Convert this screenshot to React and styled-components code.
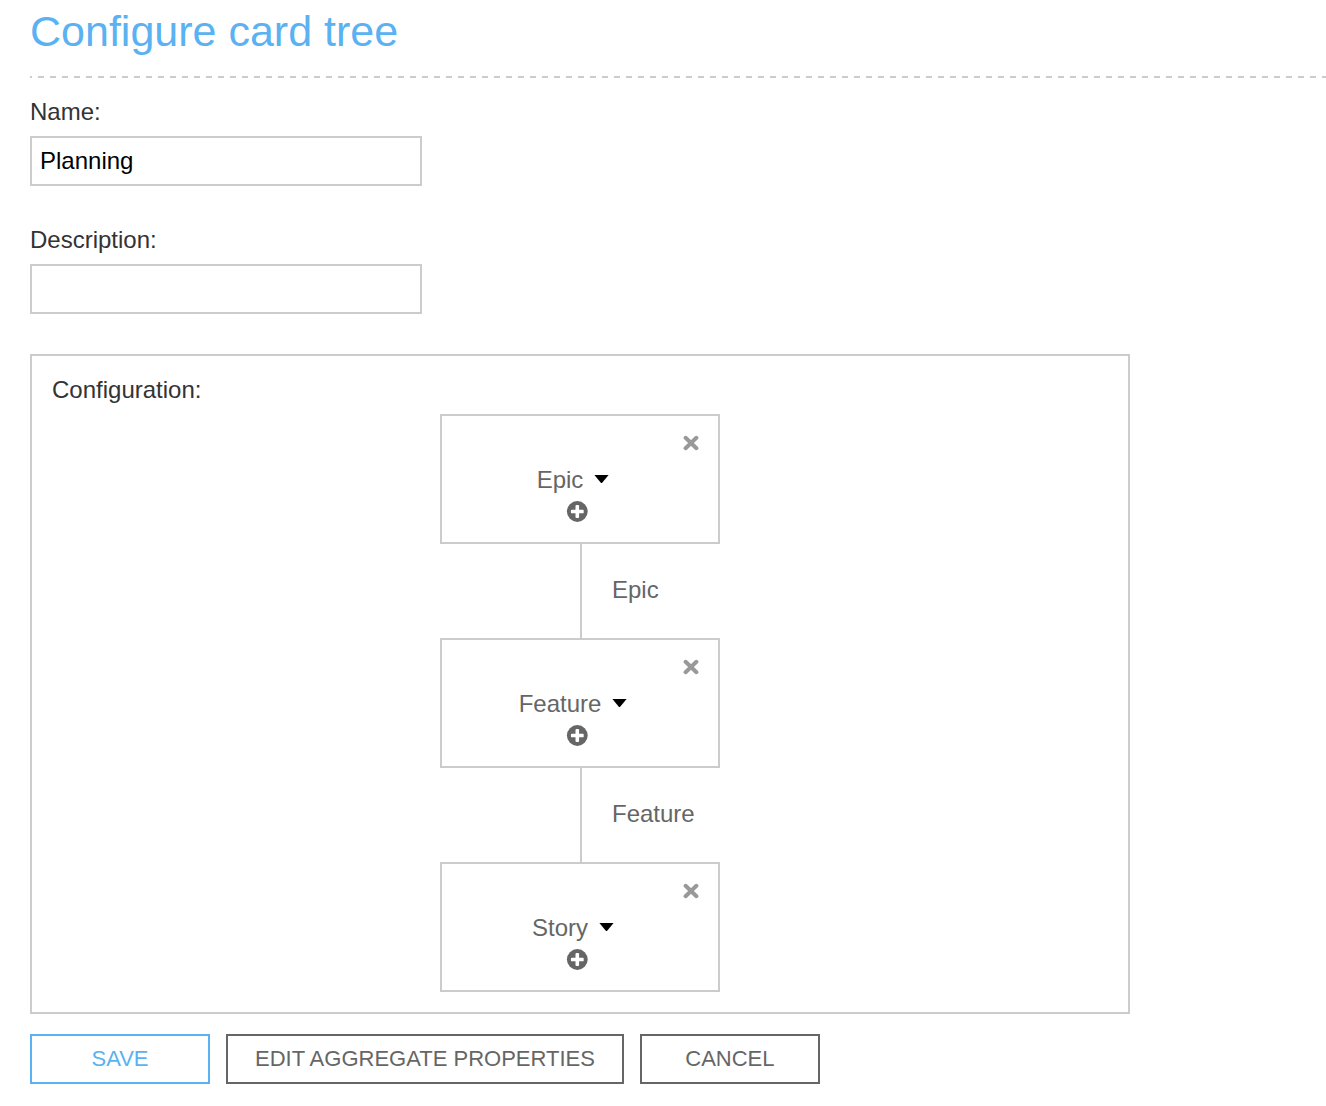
import React, { useState } from "react";
import styled, { createGlobalStyle } from "styled-components";

const GlobalStyle = createGlobalStyle`
  *, *::before, *::after { box-sizing: border-box; }
  body {
    margin: 0;
    background: #fff;
    color: #333;
    font: 24px/28px "Helvetica Neue", Helvetica, "Liberation Sans", Arial, sans-serif;
  }
  input, select, button { font: inherit; border-radius: 0; }
`;

const Page = styled.main`
  padding: 6px 0 22px 30px;
`;

const Title = styled.h1`
  margin: 0;
  color: #5ab2f2;
  font-size: 43px;
  font-weight: 400;
  line-height: 50px;
`;

const Divider = styled.hr`
  height: 2px;
  margin: 20px 0;
  border: 0;
  background: repeating-linear-gradient(
    to right,
    #ccc 0 2px,
    transparent 2px 8px,
    #ccc 8px 12px
  );
`;

const Field = styled.div`
  display: flex;
  flex-direction: column;
  gap: 10px;
  max-width: 392px;
  margin-bottom: 40px;
`;

const TextInput = styled.input`
  width: 100%;
  height: 50px;
  padding: 0 8px;
  border: 2px solid #ccc;
  background: #fff;
  color: #000;
`;

const Configuration = styled.section`
  display: flex;
  flex-direction: column;
  gap: 10px;
  max-width: 1100px;
  padding: 20px;
  border: 2px solid #ccc;
`;

const ConfigurationTitle = styled.h2`
  margin: 0;
  font-size: 24px;
  font-weight: 400;
`;

const Tree = styled.div`
  align-self: center;
  width: 280px;
  color: #666;
`;

const Card = styled.div`
  display: flex;
  flex-direction: column;
  align-items: center;
  padding: 19px;
  border: 2px solid #ccc;
`;

const IconButton = styled.button`
  display: flex;
  padding: 0;
  border: 0;
  background: none;
  cursor: pointer;
`;

const RemoveButton = styled(IconButton)`
  align-self: flex-end;
  color: #999;
`;

const AddButton = styled(IconButton)`
  margin: 7px 6px 0 0;
  color: #666;
`;

const TypePicker = styled.div`
  display: grid;
  align-items: center;
  margin-top: 15px;

  & > * { grid-area: 1 / 1; }

  & > svg {
    justify-self: end;
    margin-right: 14px;
    pointer-events: none;
  }
`;

const TypeSelect = styled.select`
  appearance: none;
  field-sizing: content;
  height: 28px;
  padding: 0 40px 0 0;
  border: 0;
  background: none;
  color: #666;
  cursor: pointer;
`;

const Connector = styled.div`
  margin-left: 50%;
  padding: 32px 0 34px 30px;
  border-left: 2px solid #ccc;
`;

const Actions = styled.div`
  display: flex;
  flex-wrap: wrap;
  gap: 16px;
  padding: 20px 20px 0 0;
`;

const ActionButton = styled.button`
  min-width: 180px;
  height: 50px;
  padding: 0 27px;
  border: 2px solid currentColor;
  background: #fff;
  color: ${({ $primary }) => ($primary ? "#5ab2f2" : "#666")};
  font-size: 22px;
  text-transform: uppercase;
  cursor: pointer;
`;

const CrossIcon = () => (
  <svg width="16" height="16" viewBox="0 0 16 16" aria-hidden="true">
    <path
      d="M2.6 2.8 13.4 13.2M13.4 2.8 2.6 13.2"
      stroke="currentColor"
      strokeWidth="4"
      strokeLinecap="round"
    />
  </svg>
);

const PlusIcon = () => (
  <svg width="22" height="22" viewBox="0 0 22 22" aria-hidden="true">
    <circle cx="11.3" cy="10.5" r="10.4" fill="currentColor" />
    <path
      d="M10.4 5h1.8v4.6h4.6v1.8h-4.6V16h-1.8v-4.6H5.8V9.6h4.6z"
      fill="#fff"
      stroke="#fff"
      strokeWidth="1.8"
      strokeLinejoin="round"
    />
  </svg>
);

const CaretIcon = () => (
  <svg width="15" height="10" viewBox="0 0 15 10" aria-hidden="true">
    <path d="M.4 0h14.2L8.4 7.6q-.9 1-1.8 0z" fill="#000" />
  </svg>
);

const TYPES = ["Epic", "Feature", "Story"];

export default function App() {
  const [name, setName] = useState("Planning");
  const [description, setDescription] = useState("");
  const [levels, setLevels] = useState(TYPES);

  const changeLevel = (index, type) =>
    setLevels(levels.map((level, i) => (i === index ? type : level)));
  const removeLevel = (index) => setLevels(levels.filter((_, i) => i !== index));
  const addLevel = (index) =>
    setLevels([...levels.slice(0, index + 1), TYPES[0], ...levels.slice(index + 1)]);

  return (
    <>
      <GlobalStyle />
      <Page>
        <Title>Configure card tree</Title>
        <Divider />
        <Field>
          <label htmlFor="name">Name:</label>
          <TextInput id="name" value={name} onChange={(e) => setName(e.target.value)} />
        </Field>
        <Field>
          <label htmlFor="description">Description:</label>
          <TextInput
            id="description"
            value={description}
            onChange={(e) => setDescription(e.target.value)}
          />
        </Field>
        <Configuration>
          <ConfigurationTitle>Configuration:</ConfigurationTitle>
          <Tree>
            {levels.map((level, index) => (
              <React.Fragment key={index}>
                <Card>
                  <RemoveButton aria-label={`Remove ${level}`} onClick={() => removeLevel(index)}>
                    <CrossIcon />
                  </RemoveButton>
                  <TypePicker>
                    <TypeSelect
                      aria-label="Card type"
                      value={level}
                      onChange={(e) => changeLevel(index, e.target.value)}
                    >
                      {TYPES.map((type) => (
                        <option key={type}>{type}</option>
                      ))}
                    </TypeSelect>
                    <CaretIcon />
                  </TypePicker>
                  <AddButton aria-label={`Add below ${level}`} onClick={() => addLevel(index)}>
                    <PlusIcon />
                  </AddButton>
                </Card>
                {index < levels.length - 1 && <Connector>{level}</Connector>}
              </React.Fragment>
            ))}
          </Tree>
        </Configuration>
        <Actions>
          <ActionButton $primary>Save</ActionButton>
          <ActionButton>Edit aggregate properties</ActionButton>
          <ActionButton>Cancel</ActionButton>
        </Actions>
      </Page>
    </>
  );
}
